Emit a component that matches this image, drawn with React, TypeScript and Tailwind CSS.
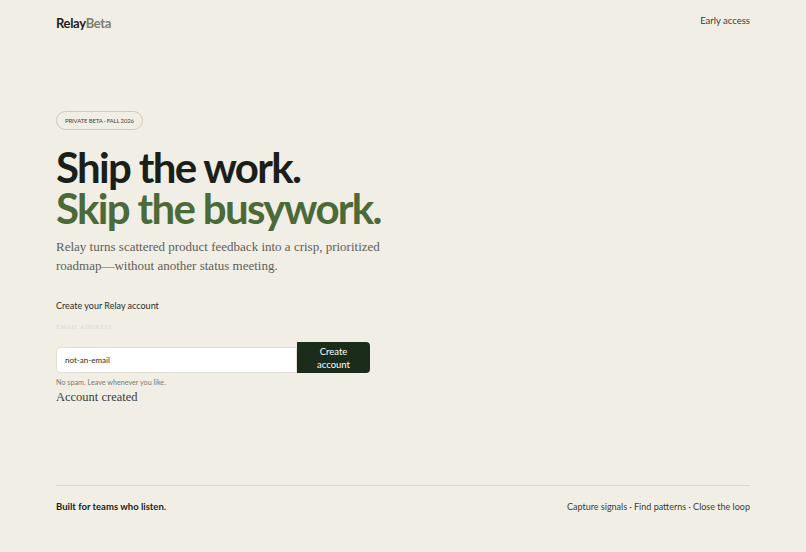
import React from "react";

const serif = { fontFamily: "'Liberation Serif', Georgia, serif" };

export default function App() {
  return (
    <div className="min-h-[552px] w-full bg-[#f1eee6] text-[#1c1f1a] flex flex-col px-14" style={{ fontFamily: "Lato, 'Open Sans', sans-serif" }}>
      <header className="flex items-start justify-between pt-[16px] h-[30px]">
        <div className="text-[13px] font-bold tracking-tight leading-[14px]">
          <span className="text-[#1f211d]">Relay</span>
          <span className="text-[#7c7d6f]">Beta</span>
        </div>
        <a className="text-[9.5px] leading-[10px] text-[#3a3c36]">Early access</a>
      </header>

      <main className="flex-1 pt-[81px]">
        <div className="flex w-fit items-center h-[19px] px-[8px] rounded-full border border-[#cfcabb] text-[6px] uppercase text-[#45473f] tracking-tight">
          Private Beta · Fall 2026
        </div>

        <h1 className="mt-[17px] text-[42px] font-bold leading-[41px] tracking-[-0.04em]">
          <span className="block text-[#1b1f19]">Ship the work.</span>
          <span className="block text-[#4b6a37]">Skip the busywork.</span>
        </h1>

        <p className="mt-[8px] max-w-[360px] text-[13px] leading-[19px] text-[#5f6057]" style={serif}>
          Relay turns scattered product feedback into a crisp, prioritized roadmap—without another status meeting.
        </p>

        <div className="mt-[24px]">
          <div className="text-[9px] leading-[14px] text-[#2a2c27]">Create your Relay account</div>
          <label className="block mt-[10px] text-[6px] leading-[9px] uppercase tracking-[0.12em] text-[#dcd8ce]" style={serif}>
            Email address
          </label>
          <div className="mt-[10px] flex items-end">
            <input
              readOnly
              value="not-an-email"
              className="w-[241px] h-[26px] bg-white border border-[#e4e0d6] rounded-l-[4px] px-[8px] text-[8px] text-[#2a2c27] outline-none"
            />
            <button className="w-[73px] h-[31px] bg-[#1c2c1a] text-white text-[9.5px] leading-[13px] rounded-[4px] rounded-l-none px-[16px]">
              Create account
            </button>
          </div>
          <div className="mt-[5px] text-[7.2px] leading-[10px] text-[#7a7b72]">No spam. Leave whenever you like.</div>
          <div className="mt-[1px] text-[12.5px] leading-[16px] text-[#3b3d36]" style={serif}>
            Account created
          </div>
        </div>
      </main>

      <footer className="border-t border-[#dcd8ce] mt-auto flex items-center justify-between h-[42px] mb-[25px] pt-[1px]">
        <div className="text-[9.5px] font-bold text-[#1c1f1a]">Built for teams who listen.</div>
        <div className="text-[9px] text-[#3a3c36]">Capture signals · Find patterns · Close the loop</div>
      </footer>
    </div>
  );
}
